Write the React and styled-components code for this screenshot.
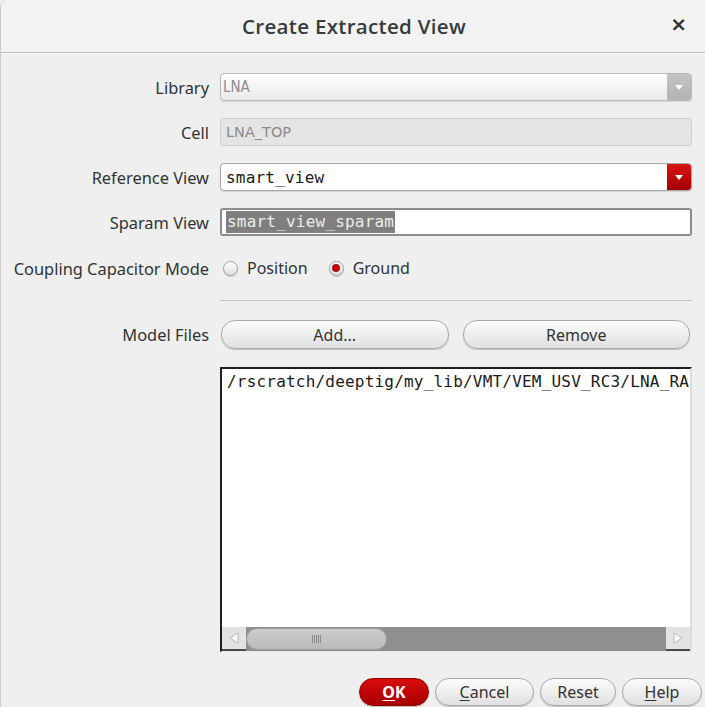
import React from "react";
import styled, { createGlobalStyle, css } from "styled-components";

const GlobalStyle = createGlobalStyle`
  html, body {
    margin: 0;
    padding: 0;
    background: #efefef;
    overflow: hidden;
  }
  body {
    font-family: "Noto Sans", "Open Sans", sans-serif;
    color: #2e3436;
  }
`;

export default function App() {
  return (
    <>
      <GlobalStyle />
      <Dialog>
        <TitleBar>
          <Title>Create Extracted View</Title>
          <Close>×</Close>
        </TitleBar>

        <Form>
          <Row>
            <Label>Library</Label>
            <Combo $disabled>
              <ComboText $disabled>LNA</ComboText>
              <ComboArrow $disabled>
                <Triangle />
              </ComboArrow>
            </Combo>
          </Row>

          <Row>
            <Label>Cell</Label>
            <Entry $disabled>LNA_TOP</Entry>
          </Row>

          <Row>
            <Label>Reference View</Label>
            <Combo>
              <ComboText>smart_view</ComboText>
              <ComboArrow>
                <Triangle />
              </ComboArrow>
            </Combo>
          </Row>

          <Row>
            <Label>Sparam View</Label>
            <Entry>
              <Selected>smart_view_sparam</Selected>
            </Entry>
          </Row>

          <Row $top={18}>
            <Label>Coupling Capacitor Mode</Label>
            <Radios>
              <RadioItem>
                <Radio />
                Position
              </RadioItem>
              <RadioItem>
                <Radio $checked />
                Ground
              </RadioItem>
            </Radios>
          </Row>

          <Row $top={18} $height={1}>
            <Label />
            <Separator />
          </Row>

          <Row $top={19} $height={29}>
            <Label>Model Files</Label>
            <ButtonPair>
              <Pill>Add...</Pill>
              <Pill>Remove</Pill>
            </ButtonPair>
          </Row>

          <Row $top={18} $height={285}>
            <Label />
            <ListBox>
              <ListText>/rscratch/deeptig/my_lib/VMT/VEM_USV_RC3/LNA_RA</ListText>
              <Scrollbar>
                <ScrollButton>
                  <Arrow viewBox="0 0 12 14">
                    <path d="M10 2 L2 7 L10 12 Z" fill="#fbfbfb" stroke="#b8b8b8" />
                  </Arrow>
                </ScrollButton>
                <Track>
                  <Thumb>
                    <Grip />
                  </Thumb>
                </Track>
                <ScrollButton>
                  <Arrow viewBox="0 0 12 14">
                    <path d="M2 2 L10 7 L2 12 Z" fill="#fbfbfb" stroke="#b8b8b8" />
                  </Arrow>
                </ScrollButton>
              </Scrollbar>
            </ListBox>
          </Row>
        </Form>

        <Footer>
          <Pill $primary $w={70}>
            <u>O</u>K
          </Pill>
          <Pill $w={99}>
            <u>C</u>ancel
          </Pill>
          <Pill $w={76}>Reset</Pill>
          <Pill $w={80}>
            <u>H</u>elp
          </Pill>
        </Footer>
      </Dialog>
    </>
  );
}

const Dialog = styled.div`
  width: 705px;
  height: 707px;
  box-sizing: border-box;
  background: #efefef;
  border-left: 1px solid #cbcbcb;
  border-top-left-radius: 8px;
  overflow: hidden;
  display: flex;
  flex-direction: column;
`;

const TitleBar = styled.div`
  height: 52px;
  flex: none;
  position: relative;
  display: flex;
  align-items: center;
  justify-content: center;
  background: #f2f2f2;
  border-bottom: 1px solid #b9b9b9;
  box-shadow: 0 1px 0 #fafafa;
`;

const Title = styled.div`
  font-family: "Open Sans", "Noto Sans", sans-serif;
  font-weight: 600;
  font-size: 20.5px;
  color: #353b3d;
  margin-left: 2px;
  letter-spacing: 0.3px;
`;

const Close = styled.div`
  position: absolute;
  right: 18px;
  top: 12px;
  font-family: "DejaVu Sans", sans-serif;
  font-weight: bold;
  font-size: 20px;
  color: #2e3436;
`;

const Form = styled.div`
  padding: 20px 13px 0 0;
  display: flex;
  flex-direction: column;
`;

const Row = styled.div`
  display: flex;
  align-items: center;
  height: ${(p) => p.$height ?? 28}px;
  margin-top: ${(p) => (p.$top ?? 17)}px;
  &:first-child {
    margin-top: 0;
  }
`;

const Label = styled.div`
  width: 208px;
  flex: none;
  margin-right: 11px;
  text-align: right;
  font-size: 16.4px;
  color: #2e3436;
  white-space: nowrap;
`;

const Combo = styled.div`
  flex: 1;
  height: 100%;
  box-sizing: border-box;
  display: flex;
  border: 1px solid ${(p) => (p.$disabled ? "#b9b9b9" : "#a9a9a9")};
  border-radius: 4px;
  overflow: hidden;
  background: ${(p) =>
    p.$disabled ? "linear-gradient(#ffffff, #e9e9e9)" : "#ffffff"};
  box-shadow: 0 1px 1px rgba(0, 0, 0, 0.12);
`;

const ComboText = styled.div`
  flex: 1;
  display: flex;
  align-items: center;
  padding-left: ${(p) => (p.$disabled ? 2 : 5)}px;
  ${(p) =>
    p.$disabled
      ? css`
          font-family: "DejaVu Sans Condensed", "Liberation Sans Narrow", sans-serif;
          font-stretch: condensed;
          font-size: 15px;
          color: #8d8d8d;
        `
      : css`
          font-family: "DejaVu Sans Mono", monospace;
          font-size: 16px;
          letter-spacing: 0.2px;
          color: #1a1a1a;
        `}
`;

const ComboArrow = styled.div`
  width: 24px;
  flex: none;
  display: flex;
  align-items: center;
  justify-content: center;
  background: ${(p) =>
    p.$disabled
      ? "linear-gradient(#c3c3c3, #b3b3b3)"
      : "linear-gradient(#d81515, #a30000)"};
`;

const Triangle = styled.div`
  width: 0;
  height: 0;
  border-left: 4px solid transparent;
  border-right: 4px solid transparent;
  border-top: 5px solid #ffffff;
  margin-top: 1px;
`;

const Entry = styled.div`
  flex: 1;
  height: 100%;
  box-sizing: border-box;
  display: flex;
  align-items: center;
  padding-left: 5px;
  border-radius: 3px;
  ${(p) =>
    p.$disabled
      ? css`
          background: #e4e4e4;
          border: 1px solid #d0d0d0;
          font-family: "DejaVu Sans", sans-serif;
          font-size: 14.5px;
          color: #8a8a8a;
        `
      : css`
          background: #ffffff;
          border: 2px solid #8c8c8c;
          padding-left: 4px;
          font-family: "DejaVu Sans Mono", monospace;
          font-size: 16px;
          letter-spacing: 0.2px;
        `}
`;

const Selected = styled.span`
  background: #7f7f7f;
  color: #ececec;
  padding: 1px 1px 2px 1px;
`;

const Radios = styled.div`
  display: flex;
  align-items: center;
  gap: 21px;
  padding-left: 3px;
`;

const RadioItem = styled.div`
  display: flex;
  align-items: center;
  gap: 9px;
  font-size: 16px;
  color: #2e3436;
`;

const Radio = styled.span`
  width: 15px;
  height: 15px;
  box-sizing: border-box;
  border-radius: 50%;
  border: 1px solid #a2a2a2;
  background: linear-gradient(#ffffff, #dedede);
  box-shadow: 0 1px 1px rgba(0, 0, 0, 0.18);
  display: flex;
  align-items: center;
  justify-content: center;
  &::after {
    content: "";
    display: ${(p) => (p.$checked ? "block" : "none")};
    width: 6px;
    height: 6px;
    border-radius: 50%;
    background: #d00000;
    box-shadow: 0 0 0 1px #8f1a1a;
  }
`;

const Separator = styled.div`
  flex: 1;
  height: 1px;
  background: #c4c4c4;
`;

const ButtonPair = styled.div`
  flex: 1;
  height: 100%;
  display: grid;
  grid-template-columns: 1fr 1fr;
  gap: 14px;
  padding: 0 2px 0 1px;
`;

const Pill = styled.button`
  height: ${(p) => (p.$w ? 28 : 29)}px;
  ${(p) => p.$w && css`width: ${p.$w}px;`}
  box-sizing: border-box;
  padding: 0;
  border-radius: 14px;
  font-family: "Noto Sans", sans-serif;
  font-size: 16px;
  cursor: pointer;
  ${(p) =>
    p.$primary
      ? css`
          background: linear-gradient(#d90c0c, #a80000);
          border: 1px solid #8e0000;
          color: #ffffff;
          font-weight: bold;
        `
      : css`
          background: linear-gradient(#fcfcfc, #e0e0e0);
          border: 1px solid #a9a9a9;
          color: #333333;
        `}
  box-shadow: 0 1px 1px rgba(0, 0, 0, 0.2);
  u {
    text-underline-offset: 2px;
  }
`;

const ListBox = styled.div`
  flex: 1;
  height: 100%;
  box-sizing: border-box;
  display: flex;
  flex-direction: column;
  background: #ffffff;
  border-top: 2px solid #1f1f1f;
  border-left: 2px solid #1f1f1f;
  border-right: 2px solid #dcdcdc;
  border-bottom: 1px solid #e6e6e6;
  overflow: hidden;
`;

const ListText = styled.div`
  flex: 1;
  padding: 3px 0 0 5px;
  font-family: "DejaVu Sans Mono", monospace;
  font-size: 16px;
  letter-spacing: 0.2px;
  color: #1a1a1a;
  white-space: nowrap;
  overflow: hidden;
`;

const Scrollbar = styled.div`
  height: 24px;
  flex: none;
  display: flex;
`;

const ScrollButton = styled.div`
  width: 24px;
  flex: none;
  box-sizing: border-box;
  background: #e3e3e3;
  border-bottom: 2px solid #4a4a4a;
  display: flex;
  align-items: center;
  justify-content: center;
`;

const Arrow = styled.svg`
  width: 12px;
  height: 14px;
`;

const Track = styled.div`
  flex: 1;
  background: #8f8f8f;
  display: flex;
  align-items: stretch;
  padding: 1px 0;
`;

const Thumb = styled.div`
  width: 141px;
  box-sizing: border-box;
  border-radius: 11px;
  border: 1px solid #9c9c9c;
  background: linear-gradient(#cdcdcd, #bababa);
  display: flex;
  align-items: center;
  justify-content: center;
`;

const Grip = styled.div`
  width: 9px;
  height: 8px;
  background: repeating-linear-gradient(
    90deg,
    #8c8c8c 0,
    #8c8c8c 1px,
    transparent 1px,
    transparent 2px
  );
`;

const Footer = styled.div`
  margin-top: 26px;
  display: flex;
  justify-content: flex-end;
  gap: 6px;
  padding-right: 3px;
`;
